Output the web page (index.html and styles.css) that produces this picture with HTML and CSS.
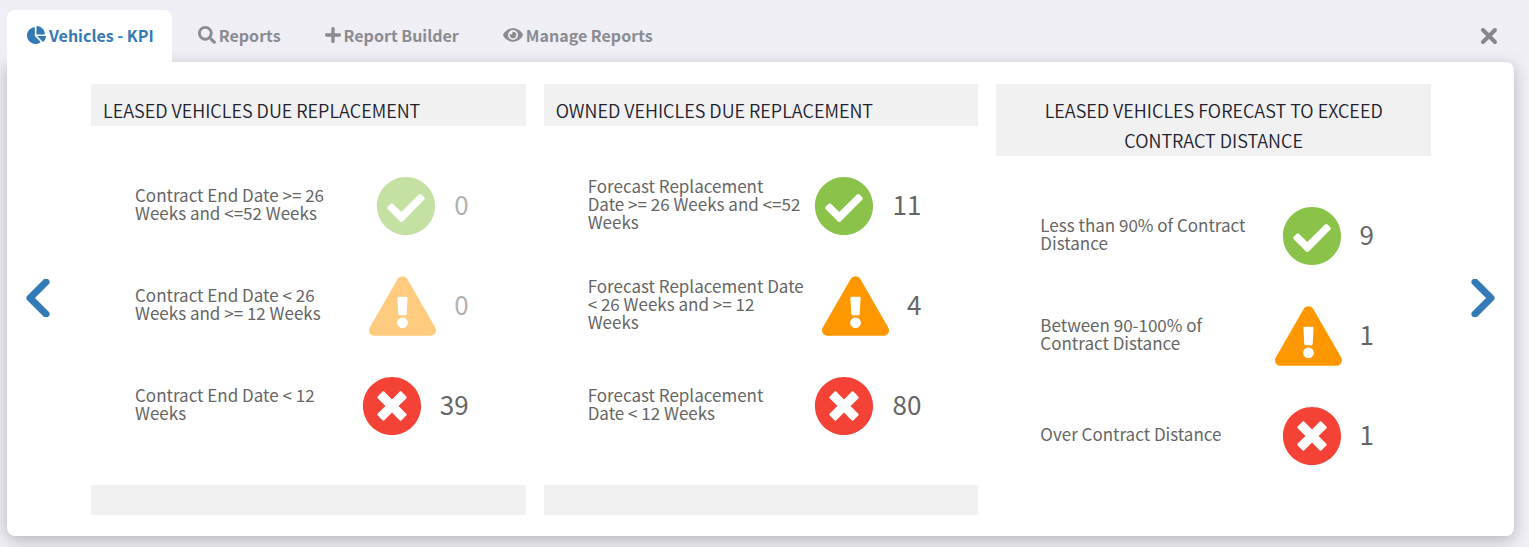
FILE: index.html
```html
<!DOCTYPE html>
<html lang="en">
<head>
    <meta charset="UTF-8">
    <meta name="viewport" content="width=device-width, initial-scale=1.0">
    <title>Vehicles - KPI</title>
    <link rel="stylesheet" href="styles.css">
</head>
<body>
    <!-- icons used more than once -->
    <svg class="symbols" aria-hidden="true">
        <symbol id="icon-check" viewBox="0 0 512 512">
            <path d="M504 256c0 136.967-111.033 248-248 248S8 392.967 8 256 119.033 8 256 8s248 111.033 248 248zM227.314 387.314l184-184c6.248-6.248 6.248-16.379 0-22.627l-22.627-22.627c-6.248-6.249-16.379-6.249-22.628 0L216 308.118l-70.059-70.059c-6.248-6.248-16.379-6.248-22.628 0l-22.627 22.627c-6.248 6.248-6.248 16.379 0 22.627l104 104c6.249 6.249 16.379 6.249 22.628.001z"/>
        </symbol>
        <symbol id="icon-warning" viewBox="0 0 576 512">
            <path d="M569.517 440.013C587.975 472.007 564.806 512 527.94 512H48.054c-36.937 0-59.999-40.055-41.577-71.987L246.423 23.985c18.467-32.009 64.72-31.951 83.154 0l239.94 416.028zM288 354c-25.405 0-46 20.595-46 46s20.595 46 46 46 46-20.595 46-46-20.595-46-46-46zm-43.673-165.346l7.418 136c.347 6.364 5.609 11.346 11.982 11.346h48.546c6.373 0 11.635-4.982 11.982-11.346l7.418-136c.375-6.874-5.098-12.654-11.982-12.654h-63.383c-6.884 0-12.356 5.78-11.981 12.654z"/>
        </symbol>
        <symbol id="icon-cross" viewBox="0 0 512 512">
            <path d="M256 8C119 8 8 119 8 256s111 248 248 248 248-111 248-248S393 8 256 8zm121.6 313.1c4.7 4.7 4.7 12.3 0 17L338 377.6c-4.7 4.7-12.3 4.7-17 0L256 312l-65.1 65.6c-4.7 4.7-12.3 4.7-17 0L134.4 338c-4.7-4.7-4.7-12.3 0-17l65.6-65-65.6-65.1c-4.7-4.7-4.7-12.3 0-17l39.6-39.6c4.7-4.7 12.3-4.7 17 0l65 65.7 65.1-65.6c4.7-4.7 12.3-4.7 17 0l39.6 39.6c4.7 4.7 4.7 12.3 0 17L312 256l65.6 65.1z"/>
        </symbol>
    </svg>

    <header class="topbar">
        <nav class="tabs">
            <a class="tab active" href="#kpi">
                <svg class="tab-icon" viewBox="0 0 544 512" width="19" height="18"><path d="M527.79 288H290.5l158.03 158.03c6.04 6.04 15.98 6.53 22.19.68 38.7-36.46 65.32-85.61 73.13-140.86 1.34-9.46-6.51-17.85-16.06-17.85zm-15.83-64.8C503.72 103.74 408.26 8.28 288.8.04 279.68-.59 272 7.1 272 16.24V240h223.77c9.14 0 16.82-7.68 16.19-16.8zM224 288V50.71c0-9.55-8.39-17.4-17.84-16.06C86.99 51.49-4.1 155.6.14 280.37 4.5 408.51 114.83 513.59 243.03 511.98c50.4-.63 96.97-16.87 135.26-44.03 7.9-5.6 8.42-17.23 1.57-24.08L224 288z"/></svg>
                Vehicles - KPI
            </a>
            <a class="tab" href="#reports">
                <svg class="tab-icon" viewBox="0 0 512 512" width="18" height="18"><path d="M505 442.7L405.3 343c-4.5-4.5-10.6-7-17-7H372c27.6-35.3 44-79.7 44-128C416 93.1 322.9 0 208 0S0 93.1 0 208s93.1 208 208 208c48.3 0 92.7-16.4 128-44v16.3c0 6.4 2.5 12.5 7 17l99.7 99.7c9.4 9.4 24.6 9.4 33.9 0l28.3-28.3c9.4-9.4 9.4-24.6.1-34zM208 336c-70.7 0-128-57.2-128-128 0-70.7 57.2-128 128-128 70.7 0 128 57.2 128 128 0 70.7-57.2 128-128 128z"/></svg>
                Reports
            </a>
            <a class="tab" href="#builder">
                <svg class="tab-icon" viewBox="0 0 448 512" width="16" height="18"><path d="M416 208H272V64c0-17.67-14.33-32-32-32h-32c-17.67 0-32 14.33-32 32v144H32c-17.67 0-32 14.33-32 32v32c0 17.67 14.33 32 32 32h144v144c0 17.67 14.33 32 32 32h32c17.67 0 32-14.33 32-32V304h144c17.67 0 32-14.33 32-32v-32c0-17.67-14.33-32-32-32z"/></svg>
                Report Builder
            </a>
            <a class="tab" href="#manage">
                <svg class="tab-icon" viewBox="0 0 576 512" width="20" height="18"><path d="M572.52 241.4C518.29 135.59 410.93 64 288 64S57.68 135.64 3.48 241.41a32.35 32.35 0 0 0 0 29.19C57.71 376.41 165.07 448 288 448s230.32-71.64 284.52-177.41a32.35 32.35 0 0 0 0-29.19zM288 400a144 144 0 1 1 144-144 143.93 143.93 0 0 1-144 144zm0-240a95.31 95.31 0 0 0-25.31 3.79 47.85 47.85 0 0 1-66.9 66.9A95.78 95.78 0 1 0 288 160z"/></svg>
                Manage Reports
            </a>
        </nav>
        <button class="close" type="button" aria-label="Close">
            <svg viewBox="0 0 18 18" width="18" height="18"><path d="M3 3l12 12M15 3L3 15"/></svg>
        </button>
    </header>

    <main class="panel">
        <button class="arrow" type="button" aria-label="Previous">
            <svg viewBox="0 0 24 38" width="24" height="38"><path d="M20 3L4 19l16 16"/></svg>
        </button>

        <div class="columns">
            <section class="kpi">
                <h2 class="kpi-title">Leased Vehicles Due Replacement</h2>
                <div class="kpi-rows">
                    <div class="row empty">
                        <span class="label">Contract End Date &gt;= 26 Weeks and &lt;=52 Weeks</span>
                        <svg class="status ok"><use href="#icon-check"/></svg>
                        <span class="count">0</span>
                    </div>
                    <div class="row empty">
                        <span class="label">Contract End Date &lt; 26 Weeks and &gt;= 12 Weeks</span>
                        <svg class="status warn"><use href="#icon-warning"/></svg>
                        <span class="count">0</span>
                    </div>
                    <div class="row">
                        <span class="label">Contract End Date &lt; 12 Weeks</span>
                        <svg class="status bad"><use href="#icon-cross"/></svg>
                        <span class="count">39</span>
                    </div>
                </div>
                <div class="kpi-footer"></div>
            </section>

            <section class="kpi">
                <h2 class="kpi-title">Owned Vehicles Due Replacement</h2>
                <div class="kpi-rows">
                    <div class="row">
                        <span class="label">Forecast Replacement Date &gt;= 26 Weeks and &lt;=52 Weeks</span>
                        <svg class="status ok"><use href="#icon-check"/></svg>
                        <span class="count">11</span>
                    </div>
                    <div class="row">
                        <span class="label">Forecast Replacement Date &lt; 26 Weeks and &gt;= 12 Weeks</span>
                        <svg class="status warn"><use href="#icon-warning"/></svg>
                        <span class="count">4</span>
                    </div>
                    <div class="row">
                        <span class="label">Forecast Replacement Date &lt; 12 Weeks</span>
                        <svg class="status bad"><use href="#icon-cross"/></svg>
                        <span class="count">80</span>
                    </div>
                </div>
                <div class="kpi-footer"></div>
            </section>

            <section class="kpi">
                <h2 class="kpi-title center">Leased Vehicles Forecast To Exceed Contract Distance</h2>
                <div class="kpi-rows">
                    <div class="row">
                        <span class="label">Less than 90% of Contract Distance</span>
                        <svg class="status ok"><use href="#icon-check"/></svg>
                        <span class="count">9</span>
                    </div>
                    <div class="row">
                        <span class="label">Between 90-100% of Contract Distance</span>
                        <svg class="status warn"><use href="#icon-warning"/></svg>
                        <span class="count">1</span>
                    </div>
                    <div class="row">
                        <span class="label">Over Contract Distance</span>
                        <svg class="status bad"><use href="#icon-cross"/></svg>
                        <span class="count">1</span>
                    </div>
                </div>
            </section>
        </div>

        <button class="arrow" type="button" aria-label="Next">
            <svg viewBox="0 0 24 38" width="24" height="38"><path d="M4 3l16 16L4 35"/></svg>
        </button>
    </main>
</body>
</html>
```
FILE: styles.css
```css
* {
    box-sizing: border-box;
}

body {
    margin: 0;
    padding: 10px 15px 11px 7px;
    background-color: #f0eff5;
    color: #666;
    font-family: "Source Sans Pro", "Noto Sans CJK SC", sans-serif;
    font-size: 17px;
}

.symbols {
    display: none;
}

button {
    padding: 0;
    border: none;
    background: none;
    cursor: pointer;
}

button svg {
    display: block;
    fill: none;
    stroke: currentColor;
    stroke-linecap: round;
    stroke-linejoin: round;
}

.topbar {
    display: flex;
    justify-content: space-between;
    align-items: center;
    padding-right: 16px;
}

.tabs {
    display: flex;
    gap: 6px;
}

.tab {
    display: flex;
    align-items: center;
    gap: 3px;
    height: 52px;
    padding: 0 18px 2px 20px;
    border-radius: 8px 8px 0 0;
    color: #8b8b92;
    font-size: 16px;
    font-weight: bold;
    text-decoration: none;
}

.tab.active {
    background-color: #fff;
    color: #337ab7;
}

.tab-icon {
    fill: currentColor;
}

.close {
    color: #85868e;
}

.close svg {
    stroke-width: 4;
}

.panel {
    display: flex;
    align-items: center;
    justify-content: space-between;
    padding: 22px 19px 21px;
    border-radius: 0 8px 8px 8px;
    background-color: #fff;
    box-shadow: 0 4px 16px rgba(0, 0, 0, 0.25);
}

.arrow {
    flex: none;
    padding-bottom: 3px;
    color: #337ab7;
}

.arrow svg {
    stroke-width: 7;
}

.columns {
    display: grid;
    flex: 1;
    grid-template-columns: repeat(3, minmax(0, 1fr));
    gap: 18px;
    min-width: 0;
    margin: 0 40px 0 41px;
}

.kpi-title {
    margin: 0;
    padding: 11px 12px 1px;
    background-color: #f1f1f1;
    color: #212130;
    font-size: 18px;
    font-weight: 350;
    line-height: 30px;
    text-transform: uppercase;
}

.kpi-title.center {
    text-align: center;
}

.kpi-rows {
    padding: 30px 57px 29px 44px;
}

.row {
    display: flex;
    align-items: center;
    height: 100px;
}

.label {
    width: 218px;
    margin-right: auto;
    padding-bottom: 4px;
    line-height: 18px;
}

.status {
    flex: none;
    width: 60px;
    height: 60px;
    margin-left: 12px;
}

.status.ok {
    fill: #8bc34a;
}

.status.warn {
    width: 67px;
    fill: #ff9800;
}

.status.bad {
    fill: #f44336;
}

.count {
    margin-left: 18px;
    padding-bottom: 4px;
    font-size: 26px;
    line-height: 30px;
}

.empty .status,
.empty .count {
    opacity: 0.5;
}

.kpi-footer {
    height: 30px;
    background-color: #f1f1f1;
}
```
